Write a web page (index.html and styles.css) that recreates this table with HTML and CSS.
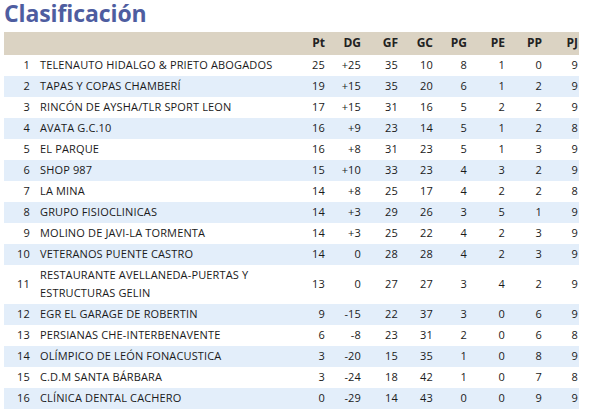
FILE: index.html
```html
<!DOCTYPE html>
<html lang="es">
<head>
<meta charset="utf-8">
<title>Clasificación</title>
<link rel="stylesheet" href="styles.css">
</head>
<body>
<h1 class="title">Clasificación</h1>
<table class="standings">
  <colgroup>
    <col class="c-rank"><col class="c-name">
    <col class="c-pt"><col class="c-dg"><col class="c-gf"><col class="c-gc">
    <col class="c-pg"><col class="c-pe"><col class="c-pp"><col class="c-pj">
  </colgroup>
  <thead>
    <tr><th></th><th></th><th>Pt</th><th>DG</th><th>GF</th><th>GC</th><th>PG</th><th>PE</th><th>PP</th><th>PJ</th></tr>
  </thead>
  <tbody>
    <tr><td>1</td><td class="name">TELENAUTO HIDALGO &amp; PRIETO ABOGADOS</td><td>25</td><td>+25</td><td>35</td><td>10</td><td>8</td><td>1</td><td>0</td><td>9</td></tr>
    <tr><td>2</td><td class="name">TAPAS Y COPAS CHAMBERÍ</td><td>19</td><td>+15</td><td>35</td><td>20</td><td>6</td><td>1</td><td>2</td><td>9</td></tr>
    <tr><td>3</td><td class="name">RINCÓN DE AYSHA/TLR SPORT LEON</td><td>17</td><td>+15</td><td>31</td><td>16</td><td>5</td><td>2</td><td>2</td><td>9</td></tr>
    <tr><td>4</td><td class="name">AVATA G.C.10</td><td>16</td><td>+9</td><td>23</td><td>14</td><td>5</td><td>1</td><td>2</td><td>8</td></tr>
    <tr><td>5</td><td class="name">EL PARQUE</td><td>16</td><td>+8</td><td>31</td><td>23</td><td>5</td><td>1</td><td>3</td><td>9</td></tr>
    <tr><td>6</td><td class="name">SHOP 987</td><td>15</td><td>+10</td><td>33</td><td>23</td><td>4</td><td>3</td><td>2</td><td>9</td></tr>
    <tr><td>7</td><td class="name">LA MINA</td><td>14</td><td>+8</td><td>25</td><td>17</td><td>4</td><td>2</td><td>2</td><td>8</td></tr>
    <tr><td>8</td><td class="name">GRUPO FISIOCLINICAS</td><td>14</td><td>+3</td><td>29</td><td>26</td><td>3</td><td>5</td><td>1</td><td>9</td></tr>
    <tr><td>9</td><td class="name">MOLINO DE JAVI-LA TORMENTA</td><td>14</td><td>+3</td><td>25</td><td>22</td><td>4</td><td>2</td><td>3</td><td>9</td></tr>
    <tr><td>10</td><td class="name">VETERANOS PUENTE CASTRO</td><td>14</td><td>0</td><td>28</td><td>28</td><td>4</td><td>2</td><td>3</td><td>9</td></tr>
    <tr><td>11</td><td class="name">RESTAURANTE AVELLANEDA-PUERTAS Y ESTRUCTURAS GELIN</td><td>13</td><td>0</td><td>27</td><td>27</td><td>3</td><td>4</td><td>2</td><td>9</td></tr>
    <tr><td>12</td><td class="name">EGR EL GARAGE DE ROBERTIN</td><td>9</td><td>-15</td><td>22</td><td>37</td><td>3</td><td>0</td><td>6</td><td>9</td></tr>
    <tr><td>13</td><td class="name">PERSIANAS CHE-INTERBENAVENTE</td><td>6</td><td>-8</td><td>23</td><td>31</td><td>2</td><td>0</td><td>6</td><td>8</td></tr>
    <tr><td>14</td><td class="name">OLÍMPICO DE LEÓN FONACUSTICA</td><td>3</td><td>-20</td><td>15</td><td>35</td><td>1</td><td>0</td><td>8</td><td>9</td></tr>
    <tr><td>15</td><td class="name">C.D.M SANTA BÁRBARA</td><td>3</td><td>-24</td><td>18</td><td>42</td><td>1</td><td>0</td><td>7</td><td>8</td></tr>
    <tr><td>16</td><td class="name">CLÍNICA DENTAL CACHERO</td><td>0</td><td>-29</td><td>14</td><td>43</td><td>0</td><td>0</td><td>9</td><td>9</td></tr>
  </tbody>
</table>
</body>
</html>
```
FILE: styles.css
```css
html, body {
  background: #ffffff;
}
body {
  margin: 0 4px;
  font-family: "Open Sans", "DejaVu Sans", sans-serif;
  color: #1a1a1a;
}
.title {
  margin: 0 0 5px 0;
  font-size: 23px;
  line-height: 27px;
  font-weight: 700;
  letter-spacing: -0.1px;
  color: #4e5da0;
}
.standings {
  width: 575px;
  table-layout: fixed;
  border-collapse: collapse;
  border-spacing: 0;
  font-size: 11px;
  letter-spacing: 0.15px;
}
.c-rank { width: 27px; }
.c-name { width: 259px; }
.c-pt { width: 36px; }
.c-dg { width: 36px; }
.c-gf { width: 37px; }
.c-gc { width: 35px; }
.c-pg { width: 34px; }
.c-pe { width: 38px; }
.c-pp { width: 37px; }
.c-pj { width: 36px; }

.standings thead th {
  background: #dbd3c3;
  font-size: 12px;
  font-weight: 700;
  letter-spacing: 0;
  line-height: 21px;
  padding: 0 1px 2px 0;
  text-align: right;
  color: #222;
}
.standings td {
  padding: 1px 1px 2px 0;
  line-height: 18px;
  text-align: right;
  vertical-align: middle;
}
.standings td.name {
  text-align: left;
  padding-left: 9px;
  padding-right: 8px;
}
.standings tbody tr:nth-child(even) td {
  background: #e3eefa;
}
```
